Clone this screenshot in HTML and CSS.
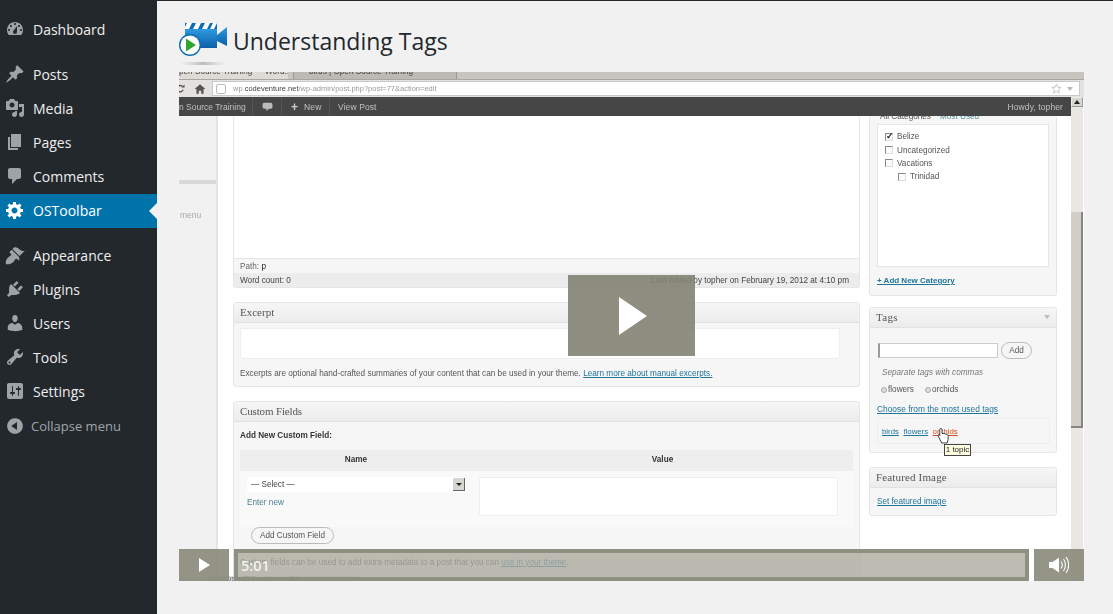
FILE: index.html
```html
<!DOCTYPE html>
<html lang="en">
<head>
<meta charset="utf-8">
<title>Understanding Tags</title>
<link rel="stylesheet" href="styles.css">
</head>
<body>
<aside class="sidebar">
  <nav class="menu">
    <a class="item"><svg class="ic" viewBox="0 0 20 20"><path fill-rule="evenodd" d="M3.76 16h12.48c1.1-1.37 1.76-3.11 1.76-5 0-4.42-3.58-8-8-8s-8 3.58-8 8c0 1.89.66 3.63 1.76 5zM10 4c.55 0 1 .45 1 1s-.45 1-1 1-1-.45-1-1 .45-1 1-1zM6 6c.55 0 1 .45 1 1s-.45 1-1 1-1-.45-1-1 .45-1 1-1zm8 0c.55 0 1 .45 1 1s-.45 1-1 1-1-.45-1-1 .45-1 1-1zm-5.37 5.55L12 7v6c0 1.1-.9 2-2 2s-2-.9-2-2c0-.57.24-1.08.63-1.45zM4 10c.55 0 1 .45 1 1s-.45 1-1 1-1-.45-1-1 .45-1 1-1zm12 0c.55 0 1 .45 1 1s-.45 1-1 1-1-.45-1-1 .45-1 1-1z"/></svg>Dashboard</a>
    <a class="item sep"><svg class="ic" viewBox="0 0 20 20"><path d="M10.44 3.02l1.82-1.82 6.36 6.35-1.83 1.82c-1.05-.68-2.48-.57-3.41.36l-.75.75c-.92.93-1.04 2.35-.35 3.41l-1.83 1.82-2.41-2.41-2.8 2.79c-.42.42-3.38 2.71-3.8 2.29s1.86-3.39 2.28-3.81l2.79-2.79L4.1 9.36l1.83-1.82c1.05.69 2.48.57 3.4-.36l.75-.75c.93-.92 1.05-2.35.36-3.41z"/></svg>Posts</a>
    <a class="item"><svg class="ic" viewBox="0 0 20 20"><path fill-rule="evenodd" d="M13 11V4c0-.55-.45-1-1-1h-1.67L9 1H5L3.67 3H2c-.55 0-1 .45-1 1v7c0 .55.45 1 1 1h10c.55 0 1-.45 1-1zM7 4.5c1.38 0 2.5 1.12 2.5 2.5S8.38 9.5 7 9.5 4.5 8.38 4.5 7 5.62 4.5 7 4.5zM14 6h5v10.5c0 1.38-1.12 2.5-2.5 2.5S14 17.88 14 16.5s1.12-2.5 2.5-2.5c.17 0 .34.02.5.05V9h-3V6zm-4 8.05V13h2v3.5c0 1.38-1.12 2.5-2.5 2.5S7 17.88 7 16.5 8.12 14 9.5 14c.17 0 .34.02.5.05z"/></svg>Media</a>
    <a class="item"><svg class="ic" viewBox="0 0 20 20"><path d="M6 15V2h10v13H6zm-1 1h8v2H3V5h2v11z"/></svg>Pages</a>
    <a class="item"><svg class="ic" viewBox="0 0 20 20"><path d="M5 2h9c1.1 0 2 .9 2 2v7c0 1.1-.9 2-2 2h-2l-5 5v-5H5c-1.1 0-2-.9-2-2V4c0-1.1.9-2 2-2z"/></svg>Comments</a>
    <a class="item active"><svg class="ic" viewBox="0 0 20 20"><path fill-rule="evenodd" d="M18 12h-2.18c-.17.7-.44 1.35-.81 1.93l1.54 1.54-2.1 2.1-1.54-1.54c-.58.36-1.23.63-1.91.79V19H8v-2.18c-.68-.16-1.33-.43-1.91-.79l-1.54 1.54-2.12-2.12 1.54-1.54c-.36-.58-.63-1.23-.79-1.91H1V9.03h2.17c.16-.7.44-1.35.8-1.94L2.43 5.55l2.1-2.1 1.54 1.54c.58-.37 1.24-.64 1.93-.81V2h3v2.18c.68.16 1.33.43 1.91.79l1.54-1.54 2.12 2.12-1.54 1.54c.36.59.64 1.24.8 1.94H18V12zm-8.5 1.5c1.66 0 3-1.34 3-3s-1.34-3-3-3-3 1.34-3 3 1.34 3 3 3z"/></svg>OSToolbar</a>
    <a class="item sep"><svg class="ic" viewBox="0 0 20 20"><path d="M14.48 11.06L7.41 3.99l1.5-1.5c.5-.56 2.3-.47 3.51.32 1.21.8 1.43 1.28 2.91 2.1 1.18.64 2.45 1.26 4.45.85zm-.71.71L6.7 4.7 4.93 6.47c-.39.39-.39 1.02 0 1.41l1.06 1.06c.39.39.39 1.03 0 1.42-.6.6-1.43 1.11-2.21 1.69-.35.26-.7.53-1.01.84C1.43 13.23 0 18 1 19s5.77-.43 7.12-1.78c.31-.31.58-.66.84-1.01.58-.78 1.09-1.61 1.69-2.21.39-.39 1.02-.39 1.41 0l1.06 1.06c.39.39 1.02.39 1.41 0z"/></svg>Appearance</a>
    <a class="item"><svg class="ic" viewBox="0 0 20 20"><path d="M13.11 4.36L9.87 7.6 8 5.73l3.24-3.24c.35-.34 1.05-.2 1.56.32.52.51.66 1.21.31 1.55zm-8 1.77l.91-1.12 9.01 9.01-1.19.84c-.71.71-2.63 1.16-3.82 1.16H6.14L4.9 17.26c-.59.59-1.54.59-2.12 0-.59-.58-.59-1.53 0-2.12l1.24-1.24v-3.88c0-1.13.4-3.19 1.09-3.89zm7.26 3.97l3.24-3.24c.34-.35 1.04-.21 1.55.31.52.51.66 1.21.31 1.55l-3.24 3.25z"/></svg>Plugins</a>
    <a class="item"><svg class="ic" viewBox="0 0 20 20"><path d="M10 9.25c-2.27 0-2.73-3.44-2.73-3.44C7 4.02 7.82 2 9.97 2c2.16 0 2.98 2.02 2.71 3.81 0 0-.41 3.44-2.68 3.44zm0 2.57L12.72 10c2.39 0 4.52 2.33 4.52 4.53v2.49s-3.65 1.13-7.24 1.13c-3.65 0-7.24-1.13-7.24-1.13v-2.49c0-2.25 1.94-4.48 4.47-4.48z"/></svg>Users</a>
    <a class="item"><svg class="ic" viewBox="0 0 20 20"><path fill-rule="evenodd" d="M16.68 9.77c-1.34 1.34-3.3 1.67-4.95.99l-5.41 6.52c-.99.99-2.59.99-3.58 0s-.99-2.59 0-3.57l6.52-5.42c-.68-1.65-.35-3.61.99-4.95 1.28-1.28 3.12-1.62 4.72-1.06l-2.89 2.89 2.82 2.82 2.86-2.87c.53 1.58.18 3.39-1.08 4.65zM3.81 16.21c.4.39 1.04.39 1.43 0 .4-.4.4-1.04 0-1.43-.39-.4-1.03-.4-1.43 0-.39.39-.39 1.03 0 1.43z"/></svg>Tools</a>
    <a class="item"><svg class="ic" viewBox="0 0 20 20"><path fill-rule="evenodd" d="M18 16V4c0-1.1-.9-2-2-2H4c-1.1 0-2 .9-2 2v12c0 1.1.9 2 2 2h12c1.1 0 2-.9 2-2zM8 11h1c.55 0 1 .45 1 1s-.45 1-1 1H8v1.5c0 .28-.22.5-.5.5s-.5-.22-.5-.5V13H6c-.55 0-1-.45-1-1s.45-1 1-1h1V5.5c0-.28.22-.5.5-.5s.5.22.5.5V11zm5-2h-1c-.55 0-1-.45-1-1s.45-1 1-1h1V5.5c0-.28.22-.5.5-.5s.5.22.5.5V7h1c.55 0 1 .45 1 1s-.45 1-1 1h-1v5.5c0 .28-.22.5-.5.5s-.5-.22-.5-.5V9z"/></svg>Settings</a>
    <a class="item collapse"><svg class="ic" viewBox="0 0 20 20"><path fill-rule="evenodd" d="M10 2.16c4.33 0 7.84 3.51 7.84 7.84s-3.51 7.84-7.84 7.84S2.16 14.33 2.16 10 5.71 2.16 10 2.16zm2 11.72V6.12L6.18 9.97z"/></svg>Collapse menu</a>
  </nav>
</aside>
<main class="main">
  <header class="title">
    <svg class="logo" viewBox="0 0 50 44">
      <defs>
        <linearGradient id="cam" x1="0" y1="0" x2="0" y2="1"><stop offset="0" stop-color="#2f9ae0"/><stop offset="1" stop-color="#0b5fa8"/></linearGradient>
        <linearGradient id="shadow" x1="0" y1="0" x2="1" y2="0"><stop offset="0" stop-color="#ccc" stop-opacity="0"/><stop offset=".5" stop-color="#bbb"/><stop offset="1" stop-color="#ccc" stop-opacity="0"/></linearGradient>
      </defs>
      <rect x="6" y="1" width="32" height="6" fill="#0e6cb4"/>
      <path d="M8 1h5l-3 6H5zM17 1h5l-3 6h-5zM26 1h5l-3 6h-5zM34 1h4l-3 6h-4z" fill="#fff"/>
      <rect x="6" y="7" width="32" height="19" fill="url(#cam)"/>
      <path d="M38 13l10-8v19l-10-5z" fill="url(#cam)"/>
      <circle cx="11" cy="23" r="11" fill="#0f6db5"/>
      <circle cx="11" cy="23" r="9.6" fill="#fff"/>
      <path d="M7 16.500l10 6.500-10 6.500z" fill="#2fa52b"/>
      <rect x="0" y="40" width="48" height="3" fill="url(#shadow)"/>
    </svg>
    <h1 class="heading">Understanding Tags</h1>
  </header>
  <section class="video">
    <div class="shot">
      <div class="tabs">
        <div class="tab tab-on"><span class="tab-text">pen Source Training — Word...&nbsp; ×</span></div>
        <div class="tab tab-off"><span class="tab-text">birds | Open Source Training</span></div>
      </div>
      <div class="addr">
        <svg class="nav-ic" viewBox="0 0 20 20"><path d="M15 6a7 7 0 1 0 1 7" fill="none" stroke="#555" stroke-width="3"/><path d="M12 8h7V1z" fill="#555"/></svg>
        <svg class="nav-ic home" viewBox="0 0 20 20"><path d="M10 2L1 10h3v8h4v-5h4v5h4v-8h3z" fill="#555"/></svg>
        <div class="url-box">
          <span class="url-page"></span>
          <span class="url">wp.<b>codeventure.net</b>/wp-admin/post.php?post=77&amp;action=edit</span>
          <svg class="star" viewBox="0 0 20 20"><path d="M10 2l2.400 5.600 6 .5-4.600 4 1.400 6L10 15l-5.200 3.100 1.400-6-4.600-4 6-.5z" fill="none" stroke="#bbb" stroke-width="1.500"/></svg>
          <span class="url-drop"></span>
        </div>
      </div>
      <div class="viewport">
        <div class="page">
          <div class="adminbar">
            <span class="ab-item ab-site">n Source Training</span>
            <span class="ab-item ab-comment"><svg class="ab-ic" viewBox="0 0 20 20"><path d="M4 3h12c1.600 0 3 1.400 3 3v5c0 1.600-1.400 3-3 3h-3l-5 4v-4H4c-1.600 0-3-1.400-3-3V6c0-1.600 1.400-3 3-3z"/></svg></span>
            <span class="ab-item ab-new"><b class="ab-plus">+</b>New</span>
            <span class="ab-item">View Post</span>
            <span class="ab-howdy">Howdy, topher</span>
          </div>
          <div class="wp">
            <div class="wp-menu"><span class="menu-line"></span><span class="menu-text">menu</span></div>
            <div class="col-main">
              <div class="panel editor">
                <div class="editor-area"></div>
                <div class="editor-path">Path: <span class="dark">p</span></div>
                <div class="editor-foot"><span>Word count: 0</span><span>Last edited by topher on February 19, 2012 at 4:10 pm</span></div>
              </div>
              <div class="panel excerpt">
                <div class="panel-head">Excerpt</div>
                <div class="area excerpt-area"></div>
                <p class="excerpt-note">Excerpts are optional hand-crafted summaries of your content that can be used in your theme. <a class="link">Learn more about manual excerpts.</a></p>
              </div>
              <div class="panel custom">
                <div class="panel-head">Custom Fields</div>
                <p class="cf-title">Add New Custom Field:</p>
                <div class="cf-table">
                  <div class="cf-head"><span class="cf-name">Name</span><span class="cf-value">Value</span></div>
                  <div class="cf-body">
                    <div class="cf-left">
                      <div class="select"><span>— Select —</span><span class="select-arrow"></span></div>
                      <a class="enter">Enter new</a>
                    </div>
                    <div class="area cf-area"></div>
                  </div>
                  <span class="btn cf-btn">Add Custom Field</span>
                </div>
                <p class="cf-note">Custom fields can be used to add extra metadata to a post that you can <a class="link">use in your theme</a>.</p>
              </div>
            </div>
            <div class="col-side">
              <div class="panel cats">
                <div class="cat-tabs"><span>All Categories</span><span class="blue">Most Used</span></div>
                <div class="cat-box">
                  <label class="check"><span class="box on"></span>Belize</label>
                  <label class="check"><span class="box"></span>Uncategorized</label>
                  <label class="check"><span class="box"></span>Vacations</label>
                  <label class="check sub"><span class="box"></span>Trinidad</label>
                </div>
                <a class="link add-cat">+ Add New Category</a>
              </div>
              <div class="panel tags">
                <div class="panel-head">Tags<span class="caret"></span></div>
                <div class="tag-input"><span class="tag-field"></span><span class="btn tag-add">Add</span></div>
                <p class="tag-hint">Separate tags with commas</p>
                <div class="tag-list"><span class="tag-x"></span>flowers<span class="tag-x second"></span>orchids</div>
                <a class="link tag-choose">Choose from the most used tags</a>
                <div class="cloud"><a class="link">birds</a><a class="link">flowers</a><a class="link hot">orchids</a></div>
              </div>
              <div class="panel featured">
                <div class="panel-head">Featured Image</div>
                <a class="link feat-link">Set featured image</a>
              </div>
            </div>
          </div>
        </div>
        <div class="scroll">
          <span class="sc-btn"><span class="sc-up"></span></span>
          <span class="sc-track"></span>
          <span class="sc-thumb"></span>
          <span class="sc-rest"></span>
        </div>
      </div>
      <div class="tip">1 topic</div>
      <svg class="hand" viewBox="0 0 14 18"><path d="M4 1.500c1 0 1.500.5 1.500 1.500v4l1-.3 1.500.3 1.500.5 1.500.5c1 .5 1 1 1 2v3l-1 4H5L2 11 1 8.500c.5-.8 1.500-.5 2 .5V3c0-1 0-1.500 1-1.500z" fill="#fff" stroke="#333" stroke-width="1"/></svg>
      <div class="status">hp?post=77&amp;action=edit#</div>
    </div>
    <button class="big-play" aria-label="Play"><svg class="big-tri" viewBox="0 0 28 38"><path d="M0 0l28 19L0 38z"/></svg></button>
    <div class="controls">
      <span class="ctl-play"><svg class="small-tri" viewBox="0 0 11 14"><path d="M0 0l11 7-11 7z"/></svg></span>
      <div class="ctl-rail"><span class="time">5:01</span></div>
      <span class="ctl-vol"><svg class="vol" viewBox="0 0 20 18"><path d="M0 6h3.500L10 1.500v15L3.500 12H0z" fill="#fff"/><path d="M12 5.500c1.500 2 1.500 5 0 7M14.500 3c2.500 3.500 2.500 8.500 0 12M17 1c3.500 4.500 3.500 11.500 0 16" fill="none" stroke="#fff" stroke-width="1.100"/></svg></span>
    </div>
  </section>
</main>
</body>
</html>
```
FILE: styles.css
```css
* { box-sizing: border-box; }
html, body { margin: 0; height: 100%; }
body {
  display: flex;
  width: 1113px;
  height: 614px;
  overflow: hidden;
  background: #f1f1f1;
  font-family: "Open Sans", sans-serif;
}
.sidebar { width: 157px; flex: none; background: #23282d; }
.menu { display: flex; flex-direction: column; padding-top: 13px; }
.item {
  position: relative;
  display: flex;
  align-items: center;
  gap: 8px;
  height: 34px;
  padding-left: 5px;
  padding-bottom: 2px;
  color: #eee;
  font-size: 14px;
}
.item.sep { margin-top: 11px; }
.ic { width: 20px; height: 20px; flex: none; fill: #9ea3a8; }
.active { background: #0073aa; color: #fff; font-weight: 400; }
.active .ic { fill: #fff; }
.active::after {
  content: "";
  position: absolute;
  right: 0;
  top: 9px;
  border: 8px solid transparent;
  border-left-width: 0;
  border-right-color: #f1f1f1;
}
.collapse { color: #a0a5aa; font-size: 13px; gap: 6px; padding-bottom: 0; }

.main {
  flex: 1;
  min-width: 0;
  padding: 0 29px 0 22px;
  border-top: 1px solid #23282d;
}
.title { display: flex; align-items: flex-start; height: 71px; padding-top: 21px; gap: 4px; }
.logo { width: 50px; height: 44px; flex: none; }
.heading {
  margin: 0;
  font-size: 23px;
  font-weight: 400;
  line-height: 38px;
  color: #23282d;
}

.video { position: relative; width: 905px; height: 509px; overflow: hidden; background: #fff; }
.shot {
  position: relative;
  display: flex;
  flex-direction: column;
  height: 509px;
  filter: blur(.45px);
  font-family: "Liberation Sans", Arial, sans-serif;
  font-size: 8.200px;
  color: #555;
}

.tabs { display: flex; height: 8px; flex: none; background: #c8c4bf; overflow: hidden; border-bottom: 1px solid #a9a6a1; gap: 5px; }
.tab { height: 8px; overflow: hidden; font-size: 8.200px; color: #444; }
.tab-text { display: block; margin-top: -5px; line-height: 10px; white-space: nowrap; }
.tab-on { width: 109px; background: #dedbd7; }
.tab-off { width: 164px; padding-left: 15px; background: #bdb9b4; border: 1px solid #999; border-top: 0; }

.addr {
  display: flex;
  align-items: center;
  height: 17px;
  flex: none;
  background: #e4e2de;
}
.nav-ic { width: 9px; height: 9px; margin-left: -3px; flex: none; }
.nav-ic.home { width: 12px; height: 12px; margin-left: 9px; }
.url-box {
  display: flex;
  align-items: center;
  flex: 1;
  height: 15px;
  margin: 0 4px 0 6px;
  padding-left: 3px;
  background: #fff;
  border: 1px solid #c9c9c9;
}
.url-page { width: 10px; height: 10px; border: 1px solid #bbb; border-radius: 2px; flex: none; }
.url { margin-left: 7px; font-size: 7.500px; color: #999; flex: 1; }
.url b { font-weight: 400; color: #444; }
.star { width: 11px; height: 11px; }
.url-drop { margin: 0 6px 0 5px; border: 3px solid transparent; border-top: 4px solid #bbb; border-bottom: 0; }

.viewport { display: flex; flex: 1; min-height: 0; }
.page { width: 892px; flex: none; display: flex; flex-direction: column; overflow: hidden; background: #fff; }
.adminbar {
  display: flex;
  align-items: center;
  height: 19px;
  flex: none;
  background: #464646;
  color: #c0c0c0;
  font-size: 8.500px;
}
.ab-item { display: flex; align-items: center; height: 19px; padding: 0 8px; border-right: 1px solid #555; white-space: nowrap; flex: none; letter-spacing: .1px; }
.ab-item:nth-child(4) { border-right: 0; }
.ab-site { width: 74px; padding: 0; letter-spacing: 0; }
.ab-comment { width: 29px; padding: 0 9px; }
.ab-new { width: 48px; gap: 6px; padding: 0 0 0 9px; }
.ab-ic { width: 11px; height: 11px; fill: #bbb; flex: none; }
.ab-plus { font-size: 12px; line-height: 1; color: #ccc; }
.ab-howdy { margin-left: auto; padding-right: 8px; letter-spacing: .1px; }

.wp { display: flex; flex: 1; min-height: 0; }
.wp-menu { display: flex; flex-direction: column; width: 39px; flex: none; background: #f1f1f1; border-right: 2px solid #e4e4e4; color: #aaa; font-size: 8.500px; }
.menu-line { height: 4px; margin-top: 64px; background: #d9d9d9; }
.menu-text { margin-top: 26px; padding-left: 1px; }
.col-main { width: 627px; flex: none; margin-left: 15px; display: flex; flex-direction: column; gap: 14px; }
.col-side { width: 188px; flex: none; margin-left: 9px; display: flex; flex-direction: column; }

.panel { flex: none; background: #f6f6f6; border: 1px solid #e6e6e6; border-radius: 3px; overflow: hidden; }
.panel-head {
  display: flex;
  align-items: center;
  height: 20px;
  padding: 0 0 2px 6px;
  background: linear-gradient(#f6f6f6, #ececec);
  border-bottom: 1px solid #e2e2e2;
  font-family: "Liberation Serif", serif;
  font-size: 11px;
  letter-spacing: .3px;
  color: #555;
}
.excerpt .panel-head { letter-spacing: 0; }
.custom .panel-head { letter-spacing: -.15px; }
.featured .panel-head { letter-spacing: .15px; }
.area { background: #fff; border: 1px solid #eee; border-radius: 2px; }
.link { color: #21759b; text-decoration: underline; }
.dark { color: #222; }

.editor { height: 172px; border-top: 0; display: flex; flex-direction: column; }
.editor-area { height: 143px; flex: none; background: #fff; border-bottom: 1px solid #e6e6e6; }
.editor-path { height: 14px; padding-left: 6px; line-height: 15px; color: #666; }
.editor-foot {
  display: flex;
  justify-content: space-between;
  height: 14px;
  padding: 0 10px 0 6px;
  line-height: 16px;
  background: #ececec;
  color: #444;
}

.excerpt { height: 85px; }
.excerpt-area { height: 31px; margin: 5px 19px 0 6px; }
.excerpt-note { margin: 10px 0 0 6px; line-height: 10px; color: #555; white-space: nowrap; }

.custom { height: 200px; }
.cf-title { margin: 9px 0 0 6px; font-weight: 700; line-height: 10px; color: #333; }
.cf-table { margin: 9px 6px 0; display: flex; flex-direction: column; align-items: flex-start; }
.cf-head { display: flex; align-self: stretch; height: 21px; padding-bottom: 2px; align-items: center; background: #eee; font-weight: 700; color: #333; }
.cf-name { width: 232px; text-align: center; }
.cf-value { width: 381px; text-align: center; }
.cf-body { display: flex; align-self: stretch; padding-top: 6px; background: #f9f9f9; height: 56px; }
.cf-left { width: 239px; padding-left: 7px; display: flex; flex-direction: column; align-items: flex-start; }
.select { display: flex; align-items: center; justify-content: space-between; width: 219px; height: 15px; padding: 0 1px 0 4px; background: #fff; color: #444; }
.select-arrow { position: relative; width: 12px; height: 13px; background: #d8d6d0; border-right: 1px solid #666; border-bottom: 1px solid #666; }
.select-arrow::after { content: ""; position: absolute; left: 3px; top: 5px; border: 3px solid transparent; border-top: 3px solid #222; border-bottom: 0; }
.enter { margin-top: 6px; color: #4b7e8e; }
.cf-area { width: 359px; height: 39px; }
.btn { display: inline-flex; align-items: center; justify-content: center; height: 17px; background: #f6f6f6; border: 1px solid #bbb; border-radius: 9px; color: #555; flex: none; }
.cf-btn { width: 83px; margin: 0 0 0 11px; }
.cf-note { margin: 14px 0 0 6px; color: #555; white-space: nowrap; }

.cats { height: 180px; border-top: 0; padding: 0 7px; }
.cat-tabs { display: flex; gap: 9px; height: 8px; padding-left: 3px; overflow: hidden; line-height: 2px; color: #555; }
.blue { color: #5e8fa3; }
.cat-box { height: 143px; padding-top: 5px; background: #fff; border: 1px solid #e6e6e6; display: flex; flex-direction: column; }
.check { display: flex; align-items: center; gap: 4px; height: 13.400px; padding-left: 7px; color: #555; }
.check.sub { padding-left: 20px; }
.box { position: relative; width: 8px; height: 8px; background: #fbfbfb; border: 1px solid #888; border-right-color: #ddd; border-bottom-color: #ddd; flex: none; }
.box.on::after { content: "✓"; position: absolute; left: 0; top: -3px; font-size: 9px; line-height: 10px; font-weight: 700; color: #222; }
.add-cat { display: block; margin-top: 9px; font-weight: 700; font-size: 8px; }

.tags { height: 146px; margin-top: 11px; }
.caret { margin: 0 6px 0 auto; border: 3px solid transparent; border-top: 4px solid #bbb; border-bottom: 0; }
.tag-input { display: flex; align-items: center; gap: 3px; margin: 14px 0 0 8px; }
.tag-field { width: 120px; height: 15px; background: #fff; border: 1px solid #ccc; border-left: 2px solid #999; }
.tag-add { width: 31px; }
.tag-hint { margin: 9px 0 0 12px; font-style: italic; line-height: 10px; color: #777; }
.tag-list { display: flex; align-items: center; margin: 7px 0 0 11px; line-height: 10px; color: #555; }
.tag-x { width: 6px; height: 6px; margin-right: 1px; border-radius: 50%; border: 1px solid #aaa; background: #ddd; }
.tag-x.second { margin-left: 11px; }
.tag-choose { display: block; margin: 9px 0 0 7px; font-size: 8.400px; line-height: 10px; }
.cloud { display: flex; gap: 4.500px; align-items: center; height: 26px; margin: 4px 6px 0 7px; padding-left: 4px; border: 1px solid #eee; border-radius: 3px; font-size: 7.800px; }
.hot { color: #d54e21; }

.featured { height: 49px; margin-top: 14px; }
.feat-link { display: block; margin: 9px 0 0 7px; line-height: 10px; }

.scroll { width: 13px; flex: none; display: flex; flex-direction: column; background: #e8e6e2; border-right: 1px solid #fff; }
.sc-btn { display: flex; align-items: center; justify-content: center; height: 10px; background: #d8d6d0; border: 1px solid #999; border-top-color: #eee; border-left-color: #eee; flex: none; }
.sc-up { border: 3px solid transparent; border-bottom: 4px solid #222; border-top: 0; }
.sc-track { height: 105px; flex: none; background: #e9e7e3; }
.sc-thumb { height: 216px; flex: none; background: #d0cec6; border-right: 2px solid #87857f; border-bottom: 2px solid #87857f; }
.sc-rest { flex: 1; background: #e9e7e3; }

.tip {
  position: absolute;
  left: 765px;
  top: 372px;
  width: 27px;
  height: 12px;
  background: #ffffe1;
  border: 1px solid #444;
  font-size: 8px;
  line-height: 10px;
  text-align: center;
  color: #222;
}
.hand { position: absolute; left: 758px; top: 355px; width: 13px; height: 17px; }
.status {
  position: absolute;
  left: 0;
  bottom: 0;
  width: 179px;
  height: 5px;
  padding-left: 30px;
  overflow: hidden;
  background: #ddd;
  font-size: 8px;
  line-height: 6px;
  color: #666;
}

.big-play {
  position: absolute;
  left: 389px;
  top: 203px;
  display: flex;
  align-items: center;
  justify-content: center;
  width: 127px;
  height: 81px;
  padding: 0;
  border: 0;
  background: rgba(130,130,115,.9);
}
.big-tri { width: 28px; height: 38px; fill: #fff; margin-left: 2px; }
.controls {
  position: absolute;
  left: 0;
  right: 0;
  bottom: 0;
  display: flex;
  height: 32px;
}
.ctl-play { display: flex; align-items: center; justify-content: center; width: 50px; flex: none; background: rgba(140,140,126,.93); }
.small-tri { width: 11px; height: 14px; fill: #fff; }
.ctl-rail {
  display: flex;
  align-items: center;
  width: 795px;
  margin-left: 5px;
  padding-left: 3px;
  flex: none;
  background: rgba(170,169,158,.78);
  background-clip: padding-box;
  border: 4px solid rgba(140,140,126,.97);
}
.time { font-family: "Open Sans", sans-serif; font-weight: 600; font-size: 14.500px; color: #f3f2ec; }
.ctl-vol { display: flex; align-items: center; justify-content: center; width: 50px; margin-left: 5px; flex: none; background: rgba(140,140,126,.93); }
.vol { width: 20px; height: 18px; }
```
